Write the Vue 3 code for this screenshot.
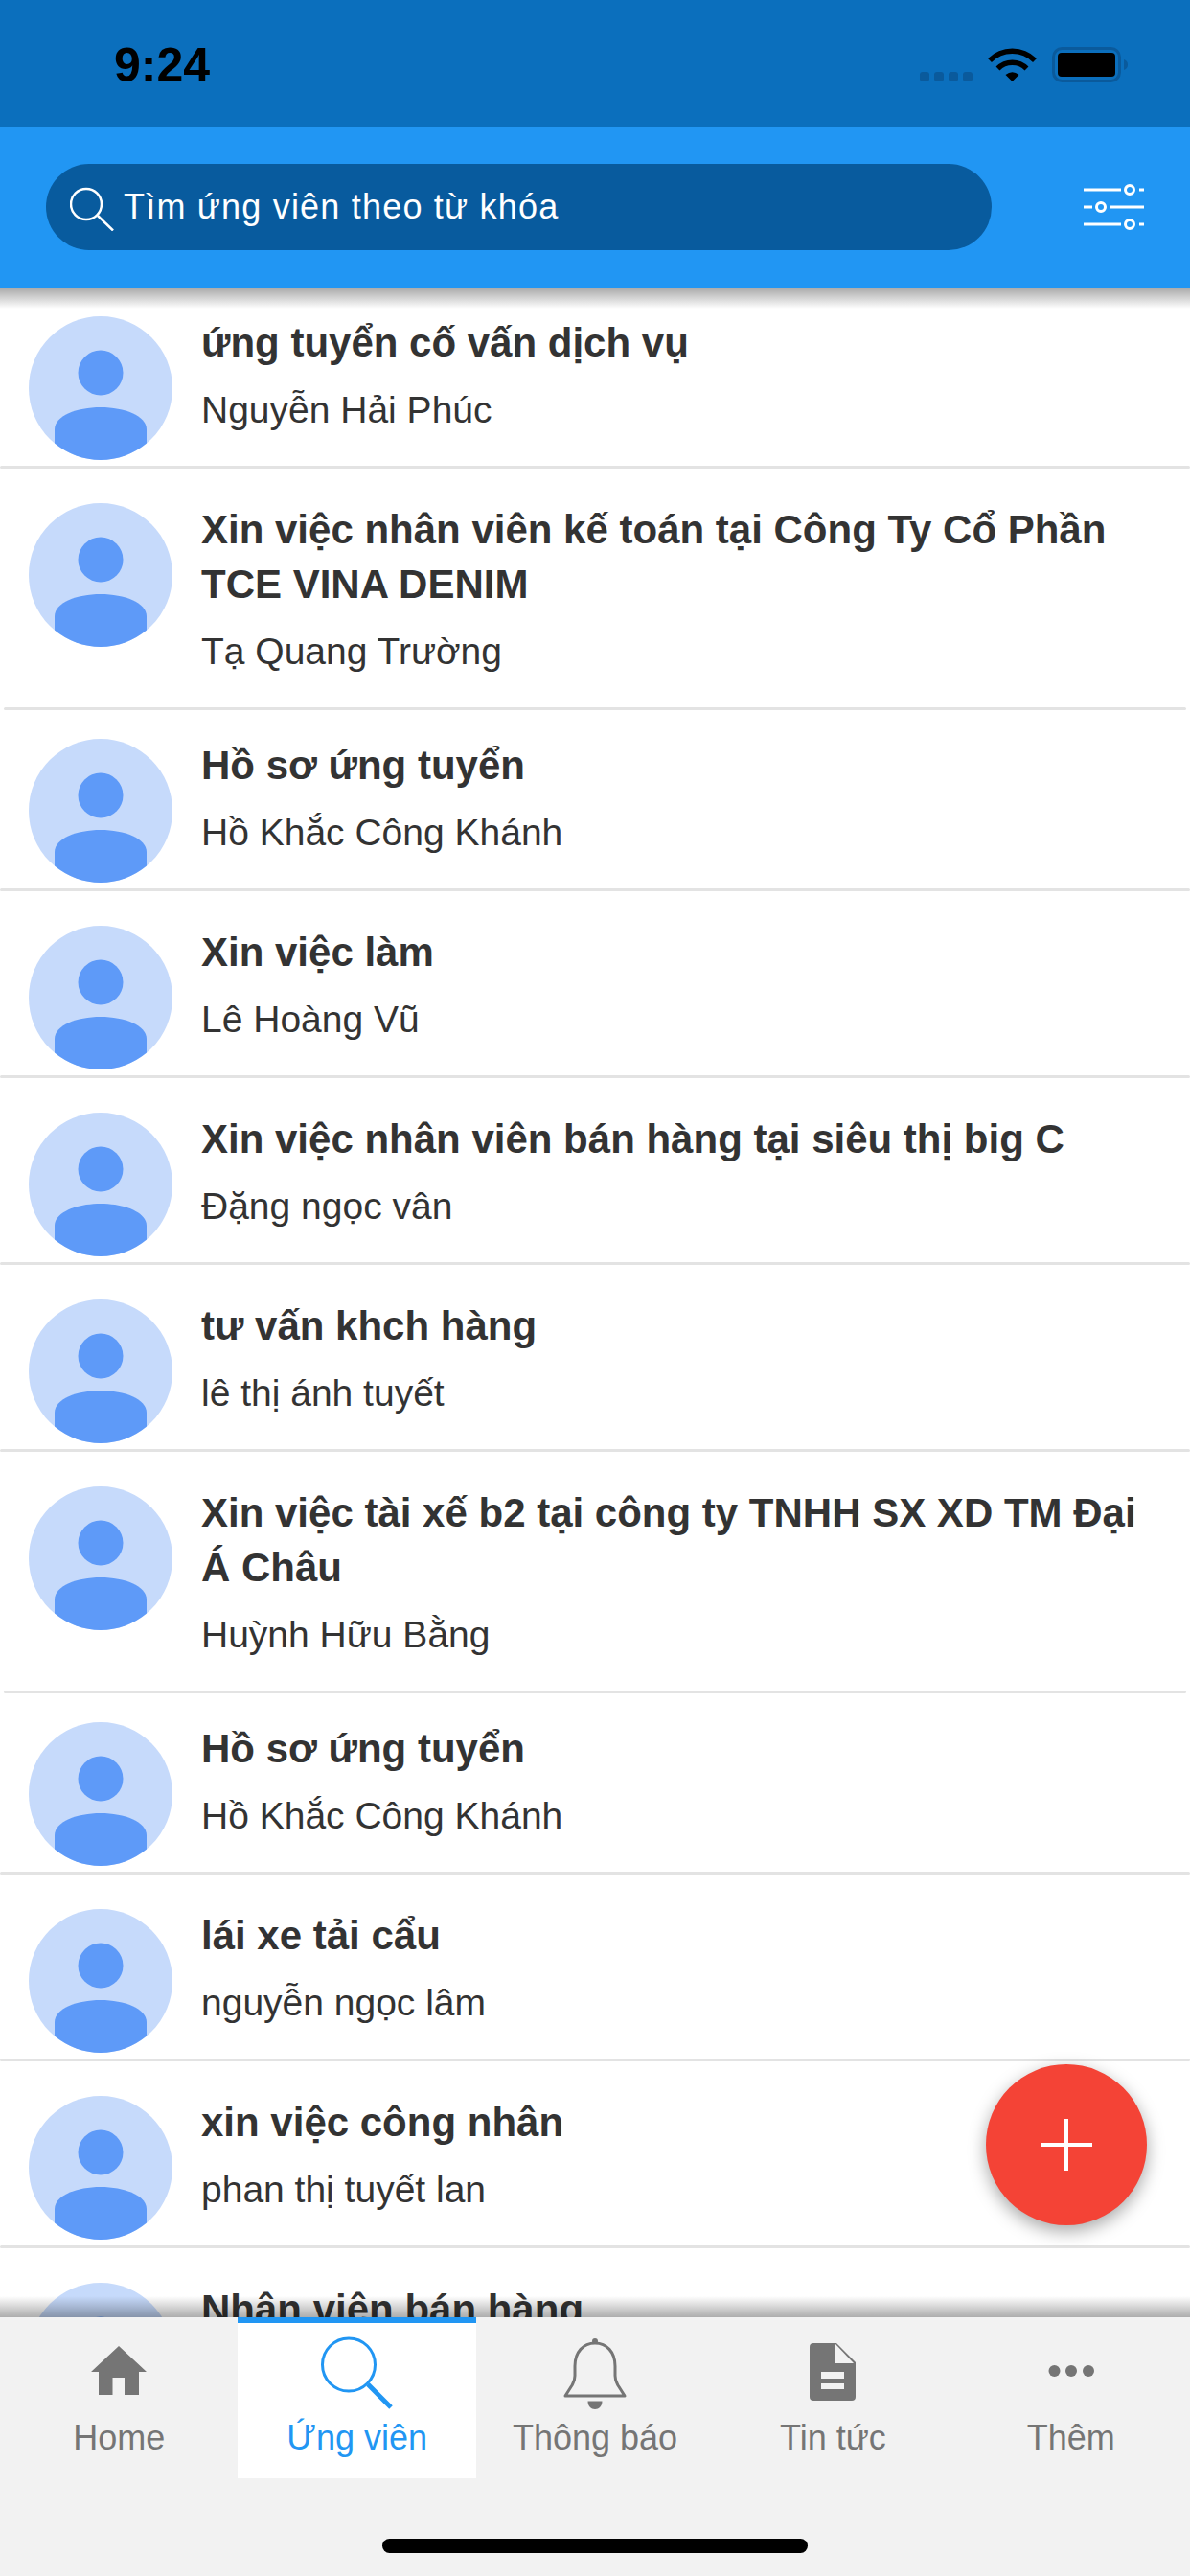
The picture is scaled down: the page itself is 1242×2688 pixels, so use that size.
<script setup>
// danh sách hồ sơ ứng viên
const candidates = [
  { title: 'ứng tuyển cố vấn dịch vụ', name: 'Nguyễn Hải Phúc', tight: true },
  { title: 'Xin việc nhân viên kế toán tại Công Ty Cổ Phần TCE VINA DENIM', name: 'Tạ Quang Trường', tall: true },
  { title: 'Hồ sơ ứng tuyển', name: 'Hồ Khắc Công Khánh', tight: true },
  { title: 'Xin việc làm', name: 'Lê Hoàng Vũ' },
  { title: 'Xin việc nhân viên bán hàng tại siêu thị big C', name: 'Đặng ngọc vân' },
  { title: 'tư vấn khch hàng', name: 'lê thị ánh tuyết' },
  { title: 'Xin việc tài xế b2 tại công ty TNHH SX XD TM Đại Á Châu', name: 'Huỳnh Hữu Bằng', tall: true },
  { title: 'Hồ sơ ứng tuyển', name: 'Hồ Khắc Công Khánh', tight: true },
  { title: 'lái xe tải cẩu', name: 'nguyễn ngọc lâm' },
  { title: 'xin việc công nhân', name: 'phan thị tuyết lan' },
  { title: 'Nhân viên bán hàng', name: '' }
]

const tabs = [
  { key: 'home', label: 'Home' },
  { key: 'search', label: 'Ứng viên', active: true },
  { key: 'bell', label: 'Thông báo' },
  { key: 'news', label: 'Tin tức' },
  { key: 'more', label: 'Thêm' }
]
</script>

<template>
  <div class="page">
    <div class="status-bar">
      <span class="time">9:24</span>
      <svg class="status-icons" width="217" height="40" viewBox="0 0 217 40">
        <rect x="0" y="26" width="10" height="10" rx="3" fill="#0a5a9c" />
        <rect x="15" y="26" width="10" height="10" rx="3" fill="#0a5a9c" />
        <rect x="30" y="26" width="10" height="10" rx="3" fill="#0a5a9c" />
        <rect x="45" y="26" width="10" height="10" rx="3" fill="#0a5a9c" />
        <path d="M73 14A33 33 0 0 1 120 14" fill="none" stroke="#000" stroke-width="5.5" />
        <path d="M81.5 22.5A21 21 0 0 1 111.5 22.5" fill="none" stroke="#000" stroke-width="5.5" />
        <path d="M96.5 36L89.5 29Q96.5 23.5 103.5 29Z" fill="#000" />
        <rect x="139.5" y="1.5" width="69" height="34" rx="9" fill="none" stroke="#0a5a9c" stroke-width="3" />
        <rect x="144" y="6" width="60" height="25" rx="4" fill="#000" />
        <path d="M213 13C216 14 217 16 217 18.500C217 21 216 23 213 24Z" fill="#0a5a9c" />
      </svg>
    </div>

    <header class="search-header">
      <div class="search-box">
        <svg class="search-icon" width="46" height="46" viewBox="0 0 46 46" fill="none" stroke="#fff" stroke-width="2.5">
          <circle cx="17" cy="18" r="16" />
          <path d="M29 30L45 45.500" />
        </svg>
        <span class="placeholder">Tìm ứng viên theo từ khóa</span>
      </div>
      <svg width="63" height="52" viewBox="0 0 63 52" fill="none" stroke="#fff" stroke-width="3">
        <path d="M0 8H39M58 8H63M0 26H9M27 26H63M0 44H39M58 44H63" />
        <circle cx="48" cy="8" r="4.500" />
        <circle cx="18" cy="26" r="4.500" />
        <circle cx="48" cy="44" r="4.500" />
      </svg>
    </header>

    <main class="list">
      <div
        v-for="(item, i) in candidates"
        :key="i"
        class="row"
        :class="{ tight: item.tight, tall: item.tall }"
      >
        <div class="row-body">
          <svg class="avatar" width="150" height="150" viewBox="0 0 150 150">
            <circle cx="75" cy="75" r="75" fill="#c6dafb" />
            <circle cx="75" cy="59" r="23.500" fill="#5e9af8" />
            <path d="M27 118C27 104 50 95 75 95C100 95 123 104 123 118V132.600A75 75 0 0 1 27 132.600Z" fill="#5e9af8" />
          </svg>
          <div class="row-text">
            <div class="row-title">{{ item.title }}</div>
            <div class="row-name">{{ item.name }}</div>
          </div>
        </div>
        <div class="row-line"></div>
      </div>
    </main>

    <button class="fab">
      <svg width="54" height="54" viewBox="0 0 54 54" stroke="#fff" stroke-width="4">
        <path d="M27 0V54M0 27H54" />
      </svg>
    </button>

    <footer class="tabbar">
      <nav class="tabs">
        <div v-for="tab in tabs" :key="tab.key" class="tab" :class="{ active: tab.active }">
          <svg class="tab-icon" width="80" height="80" viewBox="0 0 80 80">
            <path v-if="tab.key === 'home'" d="M40 12L69 39H61V63H46V45H33.500V63H19V39H11Z" fill="#757575" />
            <g v-else-if="tab.key === 'search'" fill="none" stroke="#2196f3">
              <circle cx="31" cy="31.500" r="27.500" stroke-width="3" />
              <path d="M51 52L75 76" stroke-width="5" />
            </g>
            <g v-else-if="tab.key === 'bell'">
              <circle cx="40" cy="7" r="3" fill="#757575" />
              <path d="M40 9C52 9 61 18 61 33V43C61 48 62.500 50 64 53L71 64H9L16 53C17.500 50 19 48 19 43V33C19 18 28 9 40 9Z" fill="none" stroke="#757575" stroke-width="3" stroke-linejoin="round" />
              <path d="M32.500 69.500H47.500C47.500 75 44 78 40 78C36 78 32.500 75 32.500 69.500Z" fill="#757575" />
            </g>
            <g v-else-if="tab.key === 'news'">
              <path d="M20 9H44L64 29V65A4 4 0 0 1 60 69H20A4 4 0 0 1 16 65V13A4 4 0 0 1 20 9Z" fill="#757575" />
              <path d="M43 10V30H62Z" fill="#f2f2f2" />
              <path d="M28 39H52V46H28ZM28 51H52V57H28Z" fill="#f2f2f2" />
            </g>
            <g v-else fill="#757575">
              <circle cx="22.500" cy="38" r="6" />
              <circle cx="40" cy="38" r="6" />
              <circle cx="58" cy="38" r="6" />
            </g>
          </svg>
          <span class="tab-label">{{ tab.label }}</span>
        </div>
      </nav>
      <div class="home-indicator"></div>
    </footer>
  </div>
</template>

<style scoped>
.page {
  position: relative;
  width: 1242px;
  height: 2688px;
  display: flex;
  flex-direction: column;
  overflow: hidden;
  background: #fff;
  font-family: "Liberation Sans", Arial, sans-serif;
}

.status-bar {
  height: 132px;
  flex-shrink: 0;
  display: flex;
  align-items: flex-start;
  justify-content: space-between;
  padding: 0 65px 0 119px;
  box-sizing: border-box;
  background: #0b6fbd;
}

.time {
  margin-top: 39px;
  font-size: 50px;
  line-height: 58px;
  font-weight: 700;
  color: #000;
}

.status-icons {
  margin-top: 49px;
}

.search-header {
  position: relative;
  z-index: 2;
  height: 168px;
  flex-shrink: 0;
  display: flex;
  align-items: center;
  justify-content: space-between;
  padding: 0 48px;
  box-sizing: border-box;
  background: #2196f3;
}

.search-header::after {
  content: "";
  position: absolute;
  left: 0;
  right: 0;
  top: 100%;
  height: 22px;
  background: linear-gradient(rgba(0, 0, 0, 0.34), rgba(0, 0, 0, 0));
}

.search-box {
  width: 987px;
  height: 90px;
  display: flex;
  align-items: center;
  gap: 10px;
  padding-left: 25px;
  box-sizing: border-box;
  border-radius: 45px;
  background: #085b9e;
}

.search-icon {
  margin-top: 4px;
}

.placeholder {
  font-size: 36px;
  line-height: 48px;
  letter-spacing: 1.2px;
  color: #fff;
}

.list {
  flex: 1;
  min-height: 0;
  overflow: hidden;
}

.row-body {
  display: flex;
  align-items: flex-start;
  gap: 30px;
  padding: 36px 30px 6px;
}

.row.tight .row-body {
  padding-top: 30px;
}

.avatar {
  flex-shrink: 0;
}

.row-text {
  flex: 1;
  min-width: 0;
  margin-top: -1px;
  padding-bottom: 28px;
  color: #333;
}

.row-title {
  font-size: 42px;
  line-height: 57px;
  font-weight: 700;
}

.row-name {
  margin-top: 18px;
  font-size: 39px;
  line-height: 48px;
}

.row-line {
  height: 3px;
  border-radius: 2px;
  background: #e3e3e3;
}

.row.tall .row-line {
  margin: 0 4px;
}

.fab {
  position: absolute;
  right: 45px;
  top: 2154px;
  z-index: 1;
  width: 168px;
  height: 168px;
  padding: 0;
  border: 0;
  border-radius: 50%;
  display: flex;
  align-items: center;
  justify-content: center;
  background: #f44336;
  box-shadow: 0 6px 18px rgba(0, 0, 0, 0.35);
}

.tabbar {
  position: relative;
  z-index: 2;
  height: 270px;
  flex-shrink: 0;
  background: #f2f2f2;
}

.tabbar::before {
  content: "";
  position: absolute;
  left: 0;
  right: 0;
  bottom: 100%;
  height: 22px;
  background: linear-gradient(rgba(0, 0, 0, 0), rgba(0, 0, 0, 0.32));
}

.tabs {
  display: grid;
  grid-template-columns: repeat(5, 1fr);
  height: 168px;
}

.tab {
  display: flex;
  flex-direction: column;
  align-items: center;
  padding-top: 18px;
  box-sizing: border-box;
  color: #757575;
}

.tab.active {
  background: #fff;
  box-shadow: inset 0 6px 0 #2196f3;
  color: #2196f3;
}

.tab-label {
  margin-top: 4px;
  font-size: 36px;
  line-height: 48px;
}

.home-indicator {
  width: 444px;
  height: 15px;
  margin: 63px auto 0;
  border-radius: 8px;
  background: #000;
}
</style>

<style>
html,
body {
  margin: 0;
  background: #fff;
}
</style>
